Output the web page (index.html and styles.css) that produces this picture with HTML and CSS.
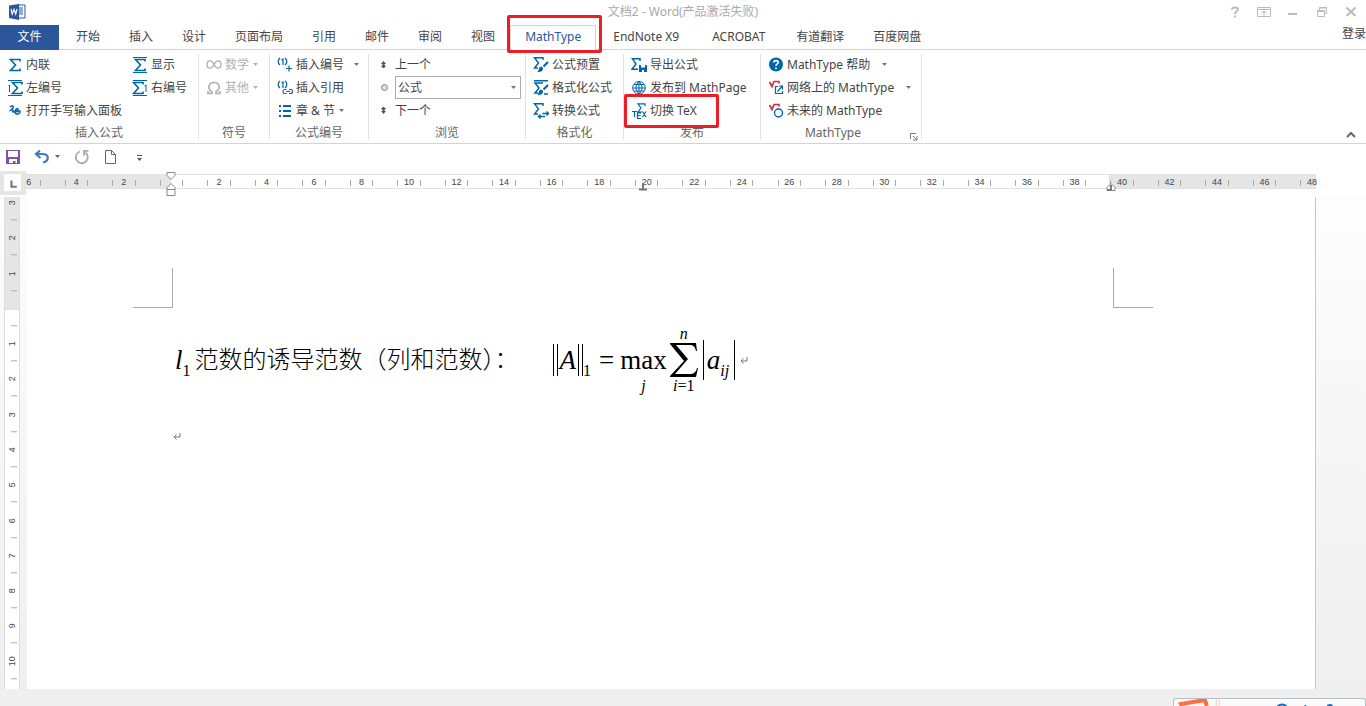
FILE: index.html
```
<!DOCTYPE html>
<html lang="zh-CN">
<head>
<meta charset="utf-8">
<title>文档2 - Word</title>
<link rel="stylesheet" href="styles.css">
</head>
<body>
<svg class="defs" aria-hidden="true">
  <symbol id="sigma" viewBox="0 0 16 16"><path d="M13 4.500V2.500H3.500L8.500 8l-5 5.500H13v-2" fill="none" stroke="currentColor" stroke-width="1.600"/></symbol>
  <symbol id="arrow" viewBox="0 0 7 4"><path d="M1 0h5L3.500 3z" fill="currentColor"/></symbol>
  <symbol id="return" viewBox="0 0 8 8"><path d="M7 1v4H1M3.500 2.500L1 5l2.500 2.500" fill="none" stroke="currentColor"/></symbol>
</svg>

<header class="titlebar">
  <svg class="logo" viewBox="0 0 18 18"><path d="M9 2h8v13H9z" fill="#fff" stroke="#2b579a"/><path d="M11 5h4M11 7h4M11 9h4M11 11h4" stroke="#2b579a"/><path d="M1 2.500L11 1v16L1 15z" fill="#2b579a"/><path d="M3 6l1.200 5L6 6.500 7.700 11 9 6" fill="none" stroke="#fff" stroke-width="1.200"/></svg>
  <h1 class="title">文档2 - Word(产品激活失败)</h1>
  <div class="window-buttons">
    <button aria-label="帮助"><svg viewBox="0 0 14 14"><path d="M4 4.500C4 2 10 1.500 10 4.500 10 6.500 7 6 7 9M7 10.500v2" fill="none" stroke="currentColor" stroke-width="2"/></svg></button>
    <button aria-label="功能区显示选项"><svg viewBox="0 0 14 14"><path d="M.5 2.500h13v9H.5zM1 4.500h12M7 11V6.500M4.500 8.500L7 6l2.500 2.500" fill="none" stroke="currentColor"/></svg></button>
    <button aria-label="最小化"><svg viewBox="0 0 14 14"><path d="M2 9h9" stroke="currentColor" stroke-width="2"/></svg></button>
    <button aria-label="还原"><svg viewBox="0 0 14 14"><path d="M2.500 5.500h7v6h-7zM2 6.500h8M4.500 5V2.500h7v6H10M4 3h8" fill="none" stroke="currentColor"/></svg></button>
    <button aria-label="关闭"><svg viewBox="0 0 14 14"><path d="M2.500 2.500l9 8.500M11.500 2.500l-9 8.500" stroke="currentColor" stroke-width="2"/></svg></button>
  </div>
</header>

<nav class="tabs">
  <button class="tab file-tab">文件</button>
  <button class="tab">开始</button>
  <button class="tab">插入</button>
  <button class="tab">设计</button>
  <button class="tab">页面布局</button>
  <button class="tab">引用</button>
  <button class="tab">邮件</button>
  <button class="tab">审阅</button>
  <button class="tab">视图</button>
  <button class="tab active-tab">MathType<span class="callout callout-tab"></span></button>
  <button class="tab add-in-tab">EndNote X9</button>
  <button class="tab add-in-tab">ACROBAT</button>
  <button class="tab">有道翻译</button>
  <button class="tab">百度网盘</button>
  <a class="login" href="#">登录</a>
</nav>

<section class="ribbon">
  <div class="group group-insert">
    <div class="commands two-columns">
      <button class="command"><svg class="icon"><use href="#sigma"/></svg>内联</button>
      <button class="command"><svg class="icon" viewBox="0 0 16 16"><path d="M1 .5h14M1 15.500h14" stroke="currentColor"/><use href="#sigma" width="16" height="16"/></svg>显示</button>
      <button class="command"><svg class="icon" viewBox="0 0 16 16"><path d="M1 .5h14M1 15.500h14M1.500 6l1-1v7" fill="none" stroke="currentColor"/><use href="#sigma" x="2" width="16" height="16"/></svg>左编号</button>
      <button class="command"><svg class="icon" viewBox="0 0 16 16"><path d="M1 .5h14M1 15.500h14M12.500 6l1.500-1v7" fill="none" stroke="currentColor"/><use href="#sigma" x="-2" width="16" height="16"/></svg>右编号</button>
      <button class="command wide"><svg class="icon" viewBox="0 0 16 16"><path d="M3 4c2-2 4-1 3 1L4 7c2-.5 3 1 1 2M6 9c2 0 5-1 5-3 0-1-3 0-3 2.500 0 4 5 3 5 0 0-1-2-1-3 1" fill="none" stroke="currentColor" stroke-width="1.500"/></svg>打开手写输入面板</button>
    </div>
    <h2 class="group-name">插入公式</h2>
  </div>
  <div class="group group-symbols">
    <div class="commands">
      <button class="command" disabled><svg class="icon" viewBox="0 0 16 16"><path d="M8 7.500C5.500 2.500 1 3 1 7.500s4.500 5 7 0 7-4.500 7 0-4.500 5-7 0z" fill="none" stroke="currentColor" stroke-width="1.300"/></svg>数学<svg class="arrow"><use href="#arrow"/></svg></button>
      <button class="command" disabled><svg class="icon" viewBox="0 0 16 16"><path d="M2 11v2.500h4V12C.5 8 3 2.500 8 2.500S15.500 8 10 12v1.500h4V11" fill="none" stroke="currentColor" stroke-width="1.700"/></svg>其他<svg class="arrow"><use href="#arrow"/></svg></button>
    </div>
    <h2 class="group-name">符号</h2>
  </div>
  <div class="group group-numbers">
    <div class="commands">
      <button class="command"><svg class="icon" viewBox="0 0 16 16"><path d="M3 1C.5 3 .5 6 3 8M4.500 3L6 2v6M8 1c2.500 2 2.500 5 0 7M9 11.500h6M12 8.500v6" fill="none" stroke="currentColor" stroke-width="1.200"/></svg>插入编号<svg class="arrow arrow-far"><use href="#arrow"/></svg></button>
      <button class="command"><svg class="icon" viewBox="0 0 16 16"><path d="M3 1C.5 3 .5 6 3 8M4.500 3L6 2v6M8 1c2.500 2 2.500 5 0 7M9.500 9.500h-2c-2 0-2 4 0 4h2M12 9.500h2c2 0 2 4 0 4h-2M9 11.500h4" fill="none" stroke="currentColor" stroke-width="1.200"/></svg>插入引用</button>
      <button class="command"><svg class="icon" viewBox="0 0 16 16"><path d="M2 3h2M6 3h8M2 8h2M6 8h8M2 13h2M6 13h8" stroke="currentColor" stroke-width="2"/></svg>章 &amp; 节<svg class="arrow"><use href="#arrow"/></svg></button>
    </div>
    <h2 class="group-name">公式编号</h2>
  </div>
  <div class="group group-browse">
    <div class="commands">
      <button class="command"><svg class="icon dark" viewBox="0 0 16 16"><path d="M7.500 4l2.500 3H8.500v1l1.500 2H8.500v1h-2v-1H5l1.500-2V7H5z" fill="currentColor"/></svg>上一个</button>
      <div class="command">
        <svg class="icon dark" viewBox="0 0 16 16"><circle cx="8.500" cy="7.500" r="3" fill="#ddd" stroke="#888"/></svg>
        <span class="picker"><select aria-label="浏览对象"><option>公式</option></select><svg class="arrow"><use href="#arrow"/></svg></span>
      </div>
      <button class="command"><svg class="icon dark" viewBox="0 0 16 16"><path d="M7.500 11L5 8h1.500V7L5 5h1.500V4h2v1H10L8.500 7v1H10z" fill="currentColor"/></svg>下一个</button>
    </div>
    <h2 class="group-name">浏览</h2>
  </div>
  <div class="group group-format">
    <div class="commands">
      <button class="command"><svg class="icon" viewBox="0 0 16 16"><path d="M10 3V.8H1.500L5.500 6l-4 5H5" fill="none" stroke="currentColor" stroke-width="1.500"/><path d="M15 5l-4.500 4.500" stroke="currentColor" stroke-width="2.200"/><path d="M8.500 9.500c-3 0-2 3-4 5.500 4 0 6-1.500 5.500-4z" fill="currentColor"/></svg>公式预置</button>
      <button class="command"><svg class="icon" viewBox="0 0 16 16"><path d="M1 .8h14M10 3H2l4 5-4 5h3M11 14h4" fill="none" stroke="currentColor" stroke-width="1.500"/><path d="M15 5l-4.500 4.500" stroke="currentColor" stroke-width="2.200"/><path d="M8.500 9.500c-3 0-2 3-4 5.500 4 0 6-1.500 5.500-4z" fill="currentColor"/></svg>格式化公式</button>
      <button class="command"><svg class="icon" viewBox="0 0 16 16"><path d="M10 3V.8H1.500L5.500 6l-4 5H5M16 10.500H9.500M13.500 8.500l2 2-2 2M12 13.500H5.500M7.500 11.500l-2 2 2 2" fill="none" stroke="currentColor" stroke-width="1.400"/></svg>转换公式</button>
    </div>
    <h2 class="group-name">格式化</h2>
  </div>
  <div class="group group-publish">
    <div class="commands">
      <button class="command"><svg class="icon" viewBox="0 0 16 16"><path d="M9 4V1.800H1.500L5 7l-4 5.200h6" fill="none" stroke="currentColor" stroke-width="1.500"/><path d="M8 8h8v7H8z" fill="currentColor"/><path d="M10 8h4v2.500h-4zM11 13h2v2h-2z" fill="#fff"/></svg>导出公式</button>
      <button class="command"><svg class="icon" viewBox="0 0 16 16"><path d="M8 1.500a6.300 6.300 0 100 12.600 6.300 6.300 0 100-12.600zM8 1.500v12.500M3 4.500h10M1.500 8h13M3 11h10M8 1.500c-4 4-4 8 0 12.500M8 1.500c4 4 4 8 0 12.500" fill="none" stroke="currentColor"/></svg>发布到 MathPage</button>
      <button class="command"><svg class="icon" viewBox="0 0 16 16"><path d="M14 3V.8H7L10 5l-3 4h4M1 8.500h5M3.500 8.500V14M10 10H6.500v5.500H10M6.500 12.500h3M11.500 8.500l3.500 5.500M15 8.500L11.500 14" fill="none" stroke="currentColor" stroke-width="1.200"/></svg>切换 TeX<span class="callout callout-tex"></span></button>
    </div>
    <h2 class="group-name">发布</h2>
  </div>
  <div class="group group-help">
    <div class="commands">
      <button class="command"><svg class="icon" viewBox="0 0 16 16"><circle cx="8" cy="7.500" r="7" fill="currentColor"/><path d="M5.800 5.500c0-2.500 4.500-2.500 4.500 0 0 1.500-2.300 1.500-2.300 3.500M8 10.500v1.800" fill="none" stroke="#fff" stroke-width="1.600"/></svg>MathType 帮助<svg class="arrow arrow-menu"><use href="#arrow"/></svg></button>
      <button class="command"><svg class="icon" viewBox="0 0 16 16"><path d="M1.500 2l2.500 4.500 2-5h5v2" fill="none" stroke="#dc2743" stroke-width="1.700"/><path d="M10 6.500H7.500v7h7V11M9.500 11.500l4.500-5M11 6h3.500v3.500" fill="none" stroke="currentColor" stroke-width="1.200"/></svg>网络上的 MathType<svg class="arrow arrow-menu"><use href="#arrow"/></svg></button>
      <button class="command"><svg class="icon" viewBox="0 0 16 16"><path d="M1.500 2l2.500 4.500 2-5h5v2" fill="none" stroke="#dc2743" stroke-width="1.700"/><circle cx="10.500" cy="10" r="4" fill="#fff" stroke="currentColor" stroke-width="1.400"/></svg>未来的 MathType</button>
    </div>
    <div class="group-foot"><h2 class="group-name">MathType</h2><button class="launcher" aria-label="MathType 选项"><svg viewBox="0 0 9 9"><path d="M1.500 7V1.500H7M4 4l3 3M8 4v4H4" fill="none" stroke="currentColor"/></svg></button></div>
  </div>
  <button class="collapse" aria-label="折叠功能区"><svg viewBox="0 0 10 8"><path d="M1 6l4-4 4 4" fill="none" stroke="currentColor" stroke-width="2"/></svg></button>
</section>

<div class="quick-access">
  <button class="quick" aria-label="保存"><svg viewBox="0 0 16 16"><path d="M1 1h14v14H1z" fill="#8250a6"/><path d="M3 2h10v6H3zM4 10h8v4h-1.500v-2H8v2H4z" fill="#fff"/></svg></button>
  <button class="quick undo" aria-label="撤消"><svg viewBox="0 0 16 16"><path d="M6 1.500L2 5l4.500 4M2 5h6c8 0 7 7 1 8.500" fill="none" stroke="#4279b7" stroke-width="2.200"/></svg></button>
  <svg class="arrow"><use href="#arrow"/></svg>
  <button class="quick redo" aria-label="重复"><svg viewBox="0 0 16 16"><path d="M6 2.500a6 6 0 105.500 1M14.500 1.800H10v5" fill="none" stroke="#aaa" stroke-width="1.800"/></svg></button>
  <button class="quick new" aria-label="新建"><svg viewBox="0 0 16 16"><path d="M3.500 1.500h6l4 4v9h-10zM9.500 1.500v4h4" fill="none" stroke="#666"/></svg></button>
  <button class="quick more" aria-label="自定义"><svg viewBox="0 0 16 16"><path d="M6 6.500h5" stroke="#555"/><path d="M6 9h5l-2.500 3z" fill="#555"/></svg></button>
</div>

<div class="ruler-row">
  <button class="tab-stop" aria-label="制表符"><svg viewBox="0 0 16 16"><path d="M7 6v6h5" fill="none" stroke="#777" stroke-width="2"/></svg></button>
  <div class="ruler">
    <div class="scale">
      <span>6</span><span>4</span><span>2</span><span></span><span>2</span><span>4</span><span>6</span><span>8</span><span>10</span><span>12</span><span>14</span><span>16</span><span>18</span><span>20</span><span>22</span><span>24</span><span>26</span><span>28</span><span>30</span><span>32</span><span>34</span><span>36</span><span>38</span><span>40</span><span>42</span><span>44</span><span>46</span><span>48</span>
    </div>
    <svg class="marker marker-indent" viewBox="0 0 10 26"><path d="M1 1.500h8v3L5 8.500l-4-4zM5 12.500l4 4v8H1v-8zM1 18.500h8" fill="#fff" stroke="#888"/></svg>
    <svg class="marker marker-center" viewBox="0 0 8 8"><path d="M4 0v6M0 6.500h8" stroke="#777" stroke-width="2"/></svg>
    <svg class="marker marker-right" viewBox="0 0 10 10"><path d="M5 1.500l4 4v3H1v-3z" fill="#fff" stroke="#888"/><path d="M5 3v5H1" fill="none" stroke="#777" stroke-width="2"/></svg>
  </div>
</div>

<main class="workspace">
  <div class="side-ruler">
    <div class="side-scale"><span>3</span><span>2</span><span>1</span><span></span><span>1</span><span>2</span><span>3</span><span>4</span><span>5</span><span>6</span><span>7</span><span>8</span><span>9</span><span>10</span></div>
  </div>
  <article class="page">
    <div class="corners"><i class="corner corner-left"></i><i class="corner corner-right"></i></div>
    <p class="line">
      <span class="math italic">l</span><sub class="index">1</sub>
      <span class="chinese">范数的诱导范数（列和范数）：</span>
      <span class="formula">
        <span class="norm"><span class="norm-inner italic">A</span></span><sub class="index">1</sub>
        <span class="equals">=</span>
        <span class="stack"><small></small><span class="operator">max</span><small class="italic">j</small></span>
        <span class="stack"><small class="italic">n</small><span class="operator"><svg class="sum" viewBox="0 0 30 36"><path d="M1 1h26l1 8h-1c-1-5-3-6-7-6H7l12 14L6 32h14c5 0 7-2 8-6h1l-2 9H1v-1l14-15L1 2z"/></svg></span><small><i>i</i>=1</small></span>
        <span class="absolute-value"><span class="italic">a</span><sub class="index italic">ij</sub></span>
      </span>
      <svg class="return"><use href="#return"/></svg>
    </p>
    <p class="empty"><svg class="return"><use href="#return"/></svg></p>
  </article>
</main>
<footer class="status">
  <div class="ime"><svg viewBox="0 0 192 7"><path d="M8 7l-1-2 24-4 2 6" fill="none" stroke="#ff6f3c" stroke-width="4"/><path d="M42.500 0v7M45.500 0v7" stroke="#ffcbb8"/><path d="M104 7q5-3 9 0M132 7v-1M154 7q4-2 5 0" fill="none" stroke="#1769b5" stroke-width="2"/></svg></div>
</footer>
</body>
</html>
```
FILE: styles.css
```
* { box-sizing: border-box; }

body {
  display: flex;
  flex-direction: column;
  min-height: 100vh;
  margin: 0;
  overflow: hidden;
  background: #fff;
  color: #444;
  font: 12px/16px "Noto Sans", "Noto Sans CJK SC", sans-serif;
}

h1, h2, p { margin: 0; font-weight: 400; }

button, select {
  padding: 0;
  border: 0;
  background: none;
  color: inherit;
  font: inherit;
}

svg { display: block; flex: none; }
.defs { position: absolute; width: 0; height: 0; }

.titlebar {
  display: grid;
  grid-template-columns: 1fr auto 1fr;
  align-items: center;
  height: 25px;
  padding: 0 8px 2px;
}
.logo { width: 18px; height: 18px; }
.title { color: #aaa; font-size: 12px; }
.window-buttons { display: flex; justify-content: flex-end; gap: 15px; color: #bbb; }
.window-buttons svg { width: 14px; height: 14px; }

.tabs {
  display: flex;
  gap: 29px;
  height: 25px;
  border-bottom: 1px solid #d4d4d4;
  white-space: nowrap;
}
.tab { height: 24px; }
.file-tab { width: 59px; height: 25px; margin-right: -12px; padding-bottom: 1px; background: #2b579a; color: #fff; }
.active-tab {
  position: relative;
  height: 25px;
  margin: 0 -14px;
  padding: 0 14px 2px;
  border: 1px solid #d4d4d4;
  border-bottom: 0;
  background: #fff;
  color: #2b579a;
}
.add-in-tab { padding: 0 2px; }
.callout { position: absolute; border: 3px solid #ee1c25; border-radius: 2px; pointer-events: none; }
.callout-tab { inset: -11px -7px -3px -4px; }
.callout-tex { inset: -5px -22px -6px -7px; z-index: 1; }
.login { margin-left: auto; padding-top: 1px; color: #444; text-decoration: none; }

.ribbon { display: flex; height: 94px; border-bottom: 1px solid #d4d4d4; }
.group {
  display: flex;
  flex-direction: column;
  margin: 4px 0;
  padding-left: 7px;
  border-right: 1px solid #e1e1e1;
  white-space: nowrap;
}
.group-insert { width: 199px; }
.group-symbols { width: 71px; }
.group-numbers { width: 99px; }
.group-browse { width: 157px; }
.group-format { width: 98px; }
.group-publish { width: 137px; }
.group-help { width: 161px; }
.commands { display: grid; grid-template-rows: repeat(3, 23px); justify-items: start; margin-top: -1px; }
.two-columns { grid-template-columns: 125px 1fr; }
.wide { grid-column: span 2; }
.command { position: relative; display: flex; align-items: center; gap: 3px; }
.command:disabled { color: #b1b1b1; }
.icon { width: 16px; height: 16px; color: #0067a5; }
.command:disabled .icon { color: #b1b1b1; }
.icon.dark { color: #555; }
.arrow { width: 7px; height: 4px; color: #777; }
.command:disabled .arrow { color: #b1b1b1; }
.arrow-far { margin-left: 6px; }
.arrow-menu { margin-left: 8px; }
.group-name { margin: 3px 0 0 -7px; color: #666; font-size: 12px; text-align: center; }
.group-foot { display: grid; grid-template-columns: 1fr 16px; align-items: end; }
.launcher { color: #777; }
.launcher svg { width: 9px; height: 9px; margin-left: 4px; }
.picker { display: flex; align-items: center; width: 126px; height: 23px; border: 1px solid #ababab; }
.picker select { flex: 1; height: 100%; padding-left: 2px; appearance: none; }
.picker .arrow { margin-right: 3px; }
.collapse { align-self: flex-end; margin: 0 10px 4px auto; color: #666; }
.collapse svg { width: 10px; height: 8px; }

.quick-access { display: flex; align-items: center; height: 27px; padding: 0 0 2px 5px; }
.quick svg { width: 16px; height: 16px; }
.undo { margin: 0 4px 0 13px; }
.quick-access .arrow { color: #666; }
.redo { margin-left: 13px; }
.new { margin-left: 12px; }
.more { margin-left: 13px; }

.ruler-row { display: flex; align-items: flex-start; height: 26px; }
.tab-stop { padding: 3px 5px 4px 4px; background: #e5e5e5; }
.tab-stop svg { width: 17px; height: 17px; background: #fdfdfd; }
.ruler {
  position: relative;
  flex: 1;
  height: 15px;
  margin: 3px 50px 0 0;
  border: solid #e1e1e1;
  border-width: 1px 0;
  background: linear-gradient(90deg, #e5e5e5 145px, #fff 145px, #fff calc(100% - 207px), #e5e5e5 calc(100% - 207px));
  font: 9px/14px "Liberation Sans", sans-serif;
}
.scale { display: flex; margin: 0 -20px 0 -21px; clip-path: inset(0 18px 0 21px); }
.scale span { display: flex; flex: 1 0 0; align-items: center; justify-content: space-between; height: 14px; padding: 0 12px; }
.scale span::before, .scale span::after { width: 1px; height: 6px; margin-top: 2px; background: #aaa; content: ""; }
.marker { position: absolute; }
.marker-indent { top: -4px; left: 140px; width: 10px; height: 26px; }
.marker-center { top: 8px; left: 613px; width: 8px; height: 8px; }
.marker-right { top: 7px; right: 200px; width: 10px; height: 10px; }

.workspace { display: flex; flex: 1; background: linear-gradient(#fdfdfd, #efefef); }
.side-ruler {
  width: 16px;
  margin: 0 7px 0 4px;
  border: solid #dedede;
  border-width: 0 1px;
  background: linear-gradient(#e5e5e5 113px, #fff 113px);
  font: 9px/10px "Liberation Sans", sans-serif;
  overflow: hidden;
}
.side-scale { display: flex; flex-direction: column; height: calc(100% + 2px); margin-top: -12px; }
.side-scale span {
  display: flex;
  flex: 1;
  align-items: center;
  justify-content: center;
  background: linear-gradient(#aaa, #aaa) 2px 0 / 6px 1px no-repeat;
  writing-mode: vertical-rl;
  transform: rotate(180deg);
}

.page {
  flex: 1;
  margin-right: 50px;
  padding-top: 71px;
  border-right: 1px solid #c6c6c6;
  background: #fff;
  color: #000;
}
.corners { display: flex; justify-content: space-between; padding: 0 162px 0 106px; }
.corner { width: 40px; height: 40px; border: 0 solid #aaa; border-bottom-width: 1px; }
.corner-left { border-right-width: 1px; }
.corner-right { border-left-width: 1px; }
.line {
  display: flex;
  align-items: center;
  height: 104px;
  padding-left: 148px;
  font: 27px/32px "Liberation Serif", serif;
  white-space: nowrap;
}
.italic, i { font-style: italic; }
.index { padding-top: 22px; font-size: 16px; line-height: 16px; vertical-align: baseline; }
.chinese { margin-left: 4px; padding-bottom: 4px; font: 300 24px/32px "Noto Sans CJK SC", sans-serif; }
.formula { display: flex; align-items: center; margin-left: 34px; }
.norm { padding: 0 3px; border: solid #000; border-width: 0 1px; }
.norm-inner { display: block; padding: 0 2px; border: solid #000; border-width: 0 1px; }
.equals { margin: 0 6px 0 8px; }
.stack { display: flex; flex-direction: column; align-items: center; }
.stack small { height: 16px; font-size: 16px; line-height: 16px; }
.operator { display: flex; align-items: center; height: 36px; }
.sum { width: 30px; height: 36px; margin: 0 2px; }
.absolute-value { display: flex; align-items: center; height: 40px; margin-left: 2px; padding: 0 5px 0 3px; border: solid #000; border-width: 0 1px; }
.return { width: 8px; height: 8px; margin-left: 5px; color: #777; }
.empty { padding: 20px 0 0 141px; }

.status { display: flex; justify-content: flex-end; align-items: flex-end; height: 17px; background: #efefef; }
.ime { width: 193px; height: 8px; border: 1px solid #b7bfc8; border-bottom: 0; border-radius: 3px 3px 0 0; background: #fafafa; }
.ime svg { width: 100%; height: 7px; }
```
